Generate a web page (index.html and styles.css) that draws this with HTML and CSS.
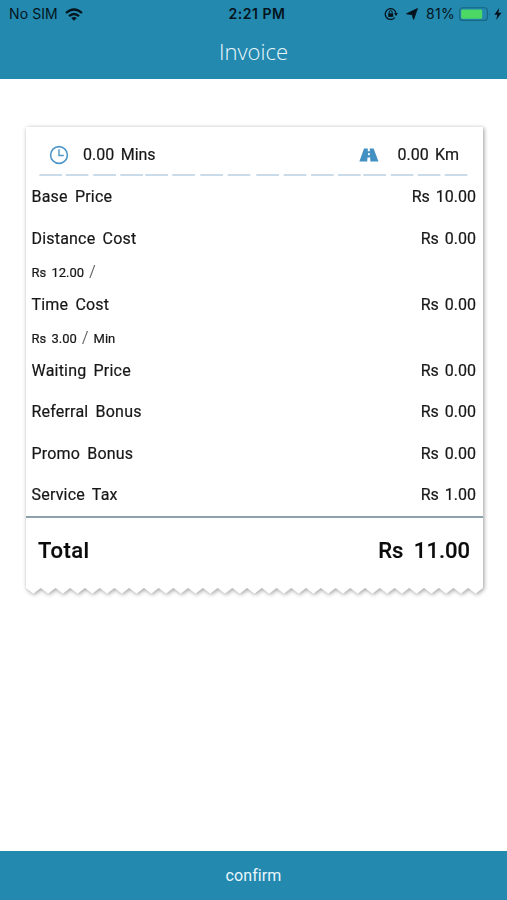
FILE: index.html
```html
<!DOCTYPE html>
<html lang="en">
<head>
<meta charset="utf-8">
<title>Invoice</title>
<link rel="stylesheet" href="styles.css">
</head>
<body>
<header class="header">
  <div class="status">
    <div class="status-left">
      <span class="carrier">No SIM</span>
      <svg class="wifi" width="18" height="13" viewBox="0 0 18 13"><g fill="none" stroke="#05141c" stroke-width="2.3"><path d="M1 5Q9-2 17 5"/><path d="M4 8.2Q9 3.8 14 8.2"/></g><path d="M6.2 10Q9 7.8 11.8 10L9 12.8Z" fill="#05141c"/></svg>
    </div>
    <span class="clock">2:21 PM</span>
    <div class="status-right">
      <svg width="14" height="14" viewBox="0 0 14 14"><path d="M10.8 10.6A5.4 5.4 0 1 1 12.1 7" fill="none" stroke="#05141c" stroke-width="1.3"/><path d="M10 6.3h4L12 9z" fill="#05141c"/><path d="M4.2 6.3h5v3.6h-5z" fill="#05141c"/><path d="M5.2 6.5V5.2a1.5 1.5 0 0 1 3 0v1.3" fill="none" stroke="#05141c" stroke-width="1"/></svg>
      <svg class="arrow" width="12" height="12" viewBox="0 0 12 12"><path d="M11.4.6L7.6 11.4L6.2 6.6L.5 5.8Z" fill="#05141c" stroke="#05141c" stroke-width=".9" stroke-linejoin="round"/></svg>
      <span class="percent">81%</span>
      <svg class="battery" width="32" height="14" viewBox="0 0 32 14"><rect x=".6" y=".8" width="27.8" height="12.6" rx="3" fill="none" stroke="#196682" stroke-width="1.1"/><rect x="2.2" y="2.4" width="21" height="9.4" rx="1.4" fill="#4bd865"/><path d="M30 5q1.4 2 0 4.2z" fill="#196682"/></svg>
      <svg class="bolt" width="8" height="12" viewBox="0 0 8 12"><path d="M5.2 0L.3 6.8H3.3L2.2 12L7.6 4.7H4.4Z" fill="#05141c"/></svg>
    </div>
  </div>
  <h1 class="title">Invoice</h1>
</header>
<main class="content">
  <section class="receipt">
    <div class="receipt-body">
      <div class="summary">
        <svg width="20" height="20" viewBox="0 0 20 20"><g fill="none" stroke="#4f98c9"><circle cx="10" cy="10" r="8.4" stroke-width="1.6"/><path d="M10 4.3V10.5H14.8" stroke-width="1.4"/></g></svg>
        <span class="minutes">0.00 Mins</span>
        <svg class="road" width="20" height="14" viewBox="0 0 20 14"><path d="M5 .4H8.8V3.3H10.8V.4H14.6L19.5 13.6H11.4L11.2 9.5H8.5L8.2 13.6H.4Z" fill="#4391c3"/><path d="M9 5h1.8v2.2H9z" fill="#eef7fc"/></svg>
        <span class="distance">0.00 Km</span>
      </div>
      <svg class="dashes" width="457" height="2" viewBox="26 0 457 2"><path d="M39.3 1h22.7M65.7 1h22.7M93.3 1h22.7M120.3 1h22.7M145.3 1h22.7M172.3 1h22.7M200.3 1h22.7M227.7 1h22.7M256.3 1h22.7M283.7 1h22.7M311 1h22.7M338 1h22.7M363.3 1h22.7M390.7 1h22.7M417.7 1h22.7M444.7 1h22.7" stroke="#b9d0e3" stroke-width="1.7"/></svg>
      <div class="rows">
        <div class="row"><span>Base Price</span><span class="amount">Rs 10.00</span></div>
        <div class="row"><span>Distance Cost</span><span class="amount">Rs 0.00</span></div>
        <div class="note">Rs 12.00 <span class="slash">/</span></div>
        <div class="row"><span>Time Cost</span><span class="amount">Rs 0.00</span></div>
        <div class="note">Rs 3.00 <span class="slash">/</span> Min</div>
        <div class="row"><span>Waiting Price</span><span class="amount">Rs 0.00</span></div>
        <div class="row"><span>Referral Bonus</span><span class="amount">Rs 0.00</span></div>
        <div class="row"><span>Promo Bonus</span><span class="amount">Rs 0.00</span></div>
        <div class="row"><span>Service Tax</span><span class="amount">Rs 1.00</span></div>
      </div>
      <div class="total"><span class="total-label">Total</span><span class="total-value">Rs 11.00</span></div>
    </div>
    <svg class="zigzag" width="457" height="6" viewBox="0 0 457 6"><defs><pattern id="teeth" width="14.742" height="6" patternUnits="userSpaceOnUse"><path d="M0 0H14.742L7.371 5.8Z" fill="#fff"/></pattern></defs><rect width="457" height="6" fill="url(#teeth)"/></svg>
  </section>
</main>
<button class="confirm">confirm</button>
</body>
</html>
```

FILE: styles.css
```css
* { box-sizing: border-box; }
body {
  margin: 0;
  height: 900px;
  display: flex;
  flex-direction: column;
  background: #fff;
  color: #171717;
  font-family: Roboto, "Liberation Sans", sans-serif;
}
svg { display: block; flex: none; }
.header { height: 79px; background: #2389af; }
.status {
  height: 28px;
  display: grid;
  grid-template-columns: 1fr auto 1fr;
  align-items: center;
  padding: 0 2px 0 9px;
  color: #05141c;
  font: 14px/28px Inter, sans-serif;
}
.status-left, .status-right { display: flex; align-items: center; }
.carrier { letter-spacing: .1px; }
.status-right { justify-content: flex-end; padding-right: 3px; }
.wifi { margin-left: 7px; }
.clock { font-weight: 600; letter-spacing: .5px; }
.arrow { margin-left: 8px; }
.percent { margin-left: 8px; letter-spacing: .3px; }
.battery { margin-left: 4px; }
.bolt { margin-left: 3px; }
.title {
  margin: 0;
  color: #e9f7fc;
  text-align: center;
  font: 300 22px/46px "Open Sans", sans-serif;
}
.content { flex: 1; padding: 48px 24px 0 26px; }
.receipt { width: 457px; filter: drop-shadow(1px 1px 2px rgba(0,0,0,.4)); }
.receipt-body { height: 461px; background: #fff; }
.summary {
  height: 47px;
  display: flex;
  align-items: center;
  padding: 8px 24px 0 23px;
  font-size: 16px;
  word-spacing: 2.5px;
  -webkit-text-stroke: .2px;
}
.minutes { margin-left: 14px; margin-top: -1px; }
.road { margin-left: auto; }
.distance { margin-left: 18px; margin-top: -1px; }
.rows { height: 340px; padding: 0 7px 0 5.5px; -webkit-text-stroke: .2px; }
.row {
  height: 41.5px;
  display: flex;
  justify-content: space-between;
  font-size: 16px;
  line-height: 42px;
  letter-spacing: .2px;
  word-spacing: 3px;
}
.amount { letter-spacing: 0; word-spacing: 2px; }
.note {
  height: 24.5px;
  font-size: 13px;
  line-height: 26px;
  word-spacing: 2px;
}
.slash { color: #555; font-size: 16px; font-weight: 300; }
.total {
  height: 72px;
  display: flex;
  justify-content: space-between;
  border-top: 2px solid #8ea2ae;
  padding: 0 13px 0 12px;
  color: #0b0b0b;
  font-size: 22px;
  font-weight: 500;
  line-height: 66px;
  word-spacing: 5px;
  -webkit-text-stroke: .2px;
}
.total-label { letter-spacing: .5px; }
.confirm {
  height: 49px;
  border: 0;
  padding: 0;
  background: #2389af;
  color: #e9f7fc;
  font: 16px/47px Roboto, sans-serif;
  letter-spacing: .1px;
}
```
